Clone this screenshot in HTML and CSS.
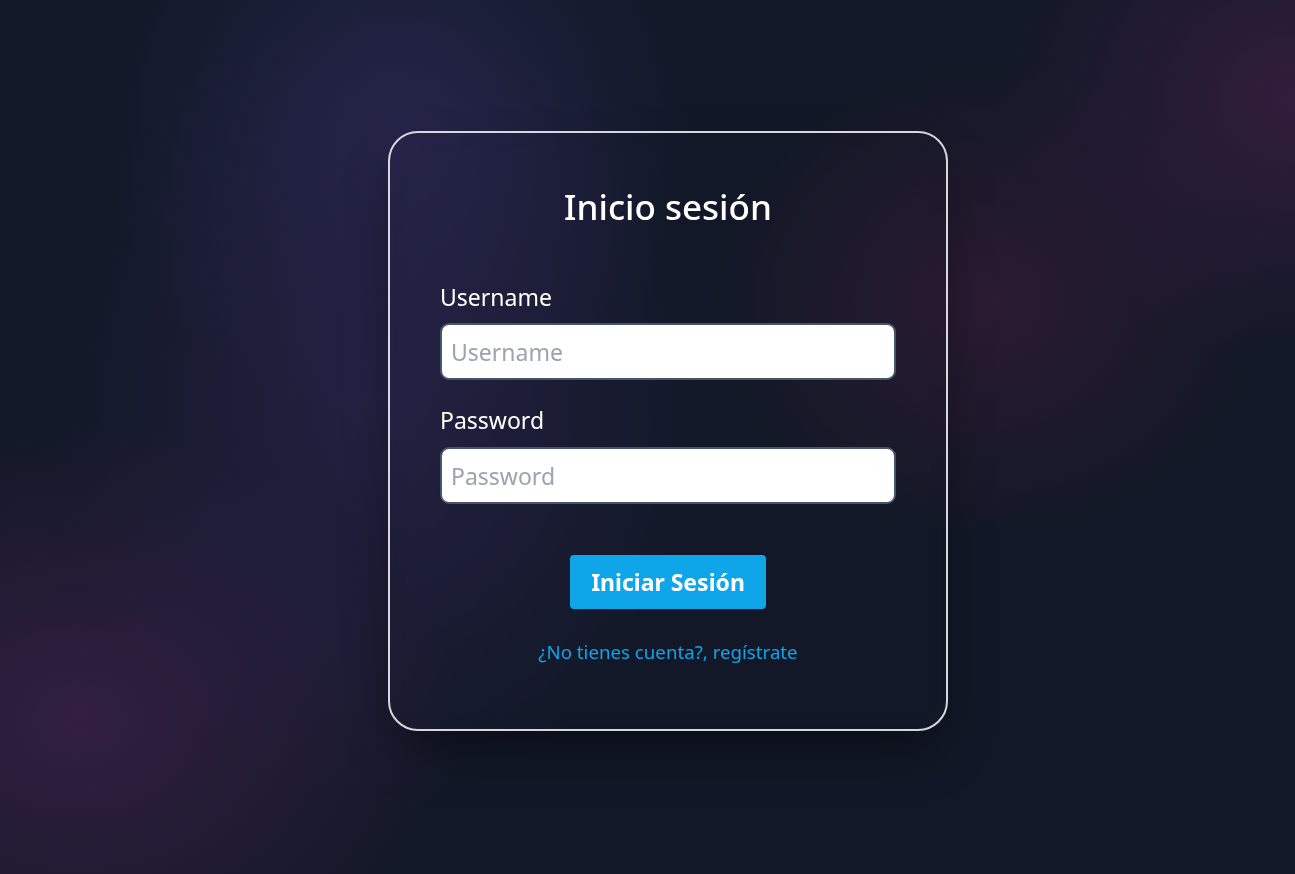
FILE: index.html
```html
<!DOCTYPE html>
<html lang="es">
<head>
<meta charset="utf-8">
<title>Inicio sesión</title>
<link rel="stylesheet" href="styles.css">
</head>
<body>
<main class="page">
  <form class="card">
    <h1 class="title">Inicio sesión</h1>
    <label class="label" for="username">Username</label>
    <input class="field" id="username" type="text" placeholder="Username">
    <label class="label label-pass" for="password">Password</label>
    <input class="field" id="password" type="password" placeholder="Password">
    <div class="actions">
      <button class="btn" type="button">Iniciar Sesión</button>
    </div>
    <a class="link" href="#">¿No tienes cuenta?, regístrate</a>
  </form>
</main>
</body>
</html>
```
FILE: styles.css
```css
* { box-sizing: border-box; }
html, body { margin: 0; height: 100%; }
body {
  font-family: "Noto Sans", "Open Sans", sans-serif;
  color: #fff;
  background-color: #121827;
  background-image:
    radial-gradient(ellipse 300px 300px at 400px 120px, rgba(42, 40, 82, 0.75) 0, rgba(42, 40, 82, 0) 100%),
    radial-gradient(ellipse 330px 400px at 380px 400px, rgba(44, 36, 78, 0.7) 0, rgba(44, 36, 78, 0) 100%),
    radial-gradient(ellipse 380px 300px at 80px 720px, rgba(56, 32, 70, 0.85) 0, rgba(56, 32, 70, 0) 100%),
    radial-gradient(ellipse 280px 240px at 990px 300px, rgba(54, 28, 56, 0.7) 0, rgba(54, 28, 56, 0) 100%),
    radial-gradient(ellipse 300px 260px at 1295px 100px, rgba(56, 30, 64, 0.85) 0, rgba(56, 30, 64, 0) 100%);
  overflow: hidden;
}
.page {
  min-height: 100vh;
  display: flex;
  align-items: center;
  justify-content: center;
  padding-bottom: 12px;
  padding-left: 41px;
}
.card {
  width: 560px;
  height: 600px;
  border: 2px solid rgba(235, 235, 245, 0.9);
  border-radius: 30px;
  padding: 50px 50px 0;
  display: flex;
  flex-direction: column;
  backdrop-filter: blur(8px);
  background: transparent;
  box-shadow: 0 25px 50px -12px rgba(0, 0, 0, 0.5);
}
.title {
  margin: 0 0 50px;
  text-align: center;
  font-size: 35px;
  line-height: 48px;
  font-weight: 500;
}
.label {
  font-size: 23px;
  line-height: 32px;
  margin-bottom: 10px;
}
.label-pass { margin-top: 24px; margin-bottom: 11px; }
.field {
  width: 100%;
  height: 57px;
  border: 2px solid #475569;
  border-radius: 9px;
  background: #fff;
  padding: 0 9px;
  font-family: inherit;
  font-size: 23px;
  color: #1f2937;
  outline: none;
}
.field::placeholder { color: #9ca3af; }
.actions {
  display: flex;
  justify-content: center;
  margin-top: 51px;
}
.btn {
  width: 196px;
  height: 54px;
  border: 0;
  border-radius: 4px;
  background: #0ea5e9;
  color: #fff;
  font-family: inherit;
  font-size: 23px;
  font-weight: 700;
  cursor: pointer;
}
.link {
  margin-top: 29px;
  align-self: center;
  font-size: 18.7px;
  line-height: 28px;
  color: #0ea5e9;
  text-decoration: none;
}
```
